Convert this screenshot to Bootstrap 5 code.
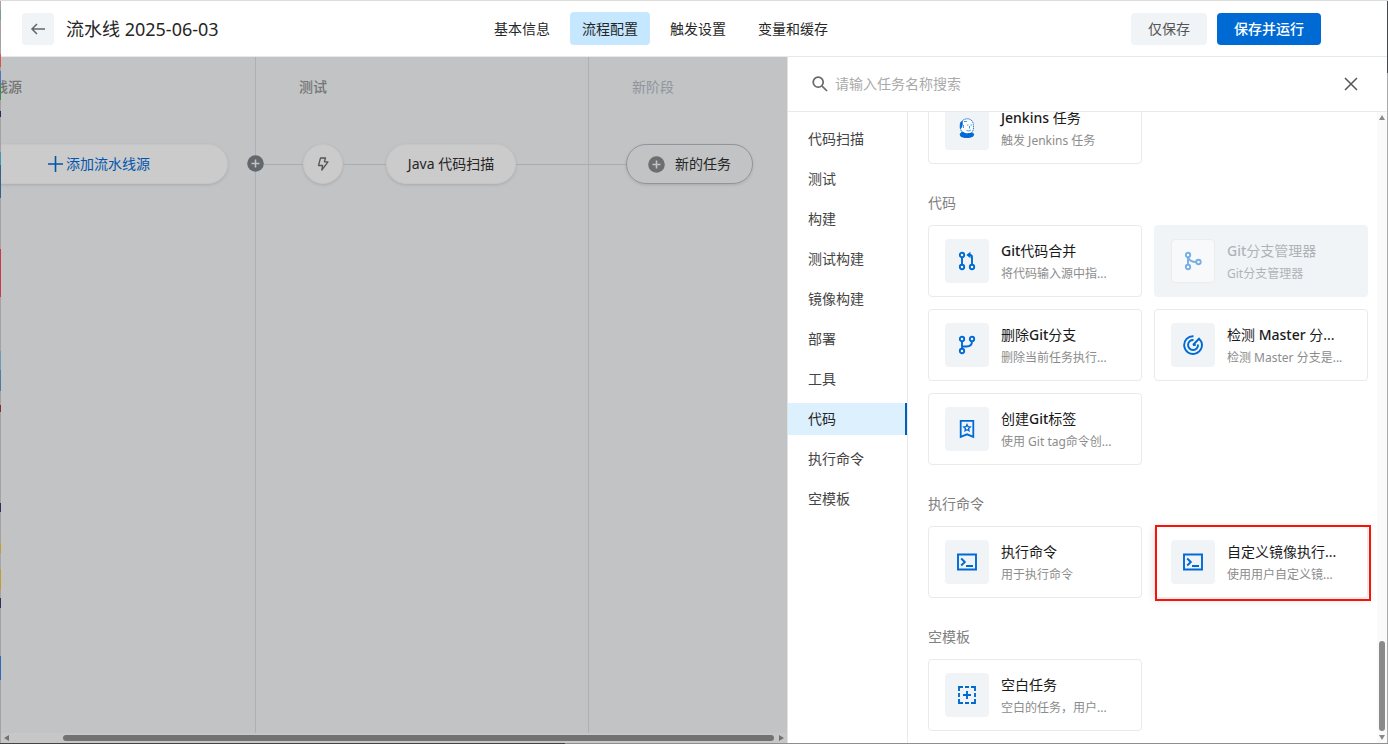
<!DOCTYPE html>
<html lang="zh-CN">
<head>
<meta charset="utf-8">
<meta name="viewport" content="width=device-width, initial-scale=1">
<title>流水线 2025-06-03</title>
<link href="https://cdn.jsdelivr.net/npm/bootstrap@5.3.0/dist/css/bootstrap.min.css" rel="stylesheet">
<script src="https://cdn.jsdelivr.net/npm/bootstrap@5.3.0/dist/js/bootstrap.bundle.min.js" defer></script>
<style>
  :root { --blue: #006ad4; --ink: #262626; --line: #e9e9e9; --tint: #f0f4f7; }
  body {
    font-family: "Noto Sans", "Noto Sans CJK SC", sans-serif;
    font-size: 14px; line-height: 22px; color: var(--ink);
    background:
      linear-gradient(#dcdcdc, #dcdcdc) top / 100% 1px no-repeat,
      linear-gradient(to right, #444 0 565px, #8f8f8f 565px) bottom / 100% 1px no-repeat,
      linear-gradient(#45484c 0 73px, #a9a9a9 73px) right / 1px 100% no-repeat,
      linear-gradient(#a9a0a2 0 10px, #74a08c 10px 20px, #a9a0a2 20px 54px, #d2564b 54px 67px, #a9a0a2 67px 71px, #4a76bd 71px 83px, #3f8a50 87px 100px, #a9a0a2 100px 111px, #2e2a58 111px 117px, #a9a0a2 117px 152px, #4397b5 152px 165px, #35618f 165px 198px, #a9a0a2 198px 249px, #c8394f 249px 297px, #a9a0a2 297px 351px, #6c9bb5 351px 370px, #4a7cab 370px 391px, #a9a0a2 391px 405px, #842d31 405px 412px, #a9a0a2 412px 503px, #332f59 503px 512px, #a9a0a2 512px 543px, #bca02f 543px 553px, #a9a5a9 553px 569px, #bca02f 569px 590px, #a9a0a2 590px 598px, #332f59 598px 608px, #a9a0a2 608px 656px, #3568b5 656px 680px, #a9a0a2 680px) left / 1px 100% no-repeat;
  }
  button { font: inherit; color: inherit; }
  .window { padding: 1px; }
  .topbar { display: grid; grid-template-columns: 1fr auto 1fr; flex: none; height: 56px; padding-right: 66px; border-bottom: 1px solid #e6e9ec; }
  .crumb { padding-left: 21px; gap: 12px; }
  .crumb h1 { font-size: 18px; line-height: 28px; }
  .btn-back, .btn-soft, .btn-run { height: 32px; border: 0; border-radius: 4px; }
  .btn-back { width: 32px; background: var(--tint); color: #666; }
  .btn-soft { background: var(--tint); color: #555; padding: 0 17px; }
  .btn-run { background: var(--blue); color: #fff; padding: 0 17px; font-weight: 500; }
  .tab { height: 33px; padding: 6px 12px; border-radius: 4px; color: var(--ink); text-decoration: none; }
  .tab.active { background: #c5e7ff; }

  .board { background: #c1c3c5; min-width: 0; }
  .stage { padding-top: 19px; border-right: 1px solid #adb1b5; flex: none; }
  .stage h2 { font-size: 14px; line-height: 22px; font-weight: 500; color: #757575; margin: 0 0 46px; padding-left: 43px; }
  .stage-source { width: 333px; margin-left: -78px; }
  .stage-test { width: 333px; }
  .stage-new { flex: 1; border: 0; }
  .stage-new h2 { color: #8f959b; font-weight: 400; }
  .track { height: 40px; }
  .wire { height: 1px; background: #a8adb2; }
  .node { height: 40px; border-radius: 20px; border: 1px solid #c4c6c8; background: #cbcbcb; box-shadow: 0 1px 3px rgba(0,0,0,.12); white-space: nowrap; padding: 0; }
  .node-source { width: 259px; margin-left: 46px; color: #0056ac; gap: 2px; }
  .node-round { width: 40px; color: #555; }
  .node-job { width: 130px; }
  .node-new { width: 127px; border-color: #8f959b; background: transparent; gap: 10px; }
  .w-a { width: 47px; } .w-b { width: 43px; } .w-c { width: 37px; }
  .joint { right: -9px; top: 11px; width: 17px; height: 17px; border: 0; padding: 0; background: none; color: #63686c; display: flex; z-index: 1; }
  .hbar { height: 10px; flex: none; background: #c7c7c7; padding: 0 3px; }
  .hbar .thumb { height: 6px; border-radius: 3px; background: #727272; margin: 0 5px 0 54px; }

  .drawer { width: 600px; flex: none; border-left: 1px solid #dfe1e3; background: #fff; }
  .finder { height: 55px; flex: none; border-bottom: 1px solid var(--line); padding: 0 28px 0 24px; }
  .finder input { border: 0; outline: 0; margin-left: 7px; padding: 0; background: none; }
  .finder input::placeholder { color: #aaa; opacity: 1; }
  .kinds { width: 120px; flex: none; padding-top: 11px; gap: 8px; border-right: 1px solid var(--line); }
  .kinds a { height: 32px; flex: none; padding: 5px 20px; color: #444; text-decoration: none; }
  .kinds a.active { background: #dcf0fe; color: var(--ink); border-right: 2px solid #005fb8; }
  .tasks { padding: 0 9px 12px 20px; min-width: 0; overflow: hidden; }
  .tasks h3 { font-size: 14px; line-height: 21px; font-weight: 400; color: #808080; margin: 28px 0 12px; }
  .tiles { display: grid; grid-template-columns: 1fr 1fr; gap: 12px; }
  .tile { height: 72px; background: #fff; border: 1px solid #e8eaec; border-radius: 4px; padding: 0 16px; gap: 12px; text-align: left; white-space: nowrap; }
  .pic { width: 44px; height: 44px; flex: none; border-radius: 4px; background: var(--tint); color: var(--blue); }
  .tile-text { padding-top: 4px; }
  .tile b { display: block; font-weight: 400; line-height: 22px; color: #1a1a1a; }
  .latin { font-weight: 500; }
  .tile small { display: block; font-size: 12px; line-height: 24px; color: #8c8c8c; }
  .tile:disabled { background: var(--tint); border-color: var(--tint); }
  .tile:disabled > * { opacity: .5; }
  .tile:disabled b, .tile:disabled small { color: #6f7377; }
  .tile:disabled .pic { background: #fff; border: 1px solid #e4e7ea; }
  .picked { position: relative; box-shadow: 0 2px 8px rgba(0,0,0,.12); }
  .picked::after { content: ""; position: absolute; inset: -2px -4px -4px 0; border: 2px solid #f91206; }
  .vbar { width: 10px; flex: none; background: #fafafa; padding: 3px 0; }
  .vbar .thumb { width: 6px; height: 90px; border-radius: 3px; background: #8a8a8a; margin-bottom: 4px; }
</style>
</head>
<body>
<svg width="0" height="0" class="position-absolute" aria-hidden="true">
  <symbol id="plus-dot" viewBox="0 0 17 17"><circle cx="8.500" cy="8.500" r="8.300" fill="currentColor"/><path d="M8.500 4.500v8M4.500 8.500h8" stroke="#c1c3c5" stroke-width="1.600"/></symbol>
  <symbol id="shell" viewBox="0 0 20 20"><path d="M1 2.500h18v15H1z M4.200 6.500l3.600 3.500-3.600 3.500M9 14h7" fill="none" stroke="currentColor" stroke-width="1.900"/></symbol>
</svg>
<div class="window d-flex flex-column vh-100">
  <header class="topbar bg-white align-items-center">
    <div class="crumb d-flex align-items-center">
      <button class="btn-back d-flex align-items-center justify-content-center p-0" aria-label="返回">
        <svg width="16" height="14" viewBox="0 0 16 14" fill="none" stroke="currentColor" stroke-width="1.500"><path d="M15 7H2M7 2L2 7l5 5"/></svg>
      </button>
      <h1 class="m-0 fw-normal">流水线 2025-06-03</h1>
    </div>
    <nav class="d-flex gap-2">
      <a class="tab" href="#">基本信息</a>
      <a class="tab active" href="#" aria-current="page">流程配置</a>
      <a class="tab" href="#">触发设置</a>
      <a class="tab" href="#">变量和缓存</a>
    </nav>
    <div class="d-flex justify-content-end" style="gap:10px">
      <button class="btn-soft">仅保存</button>
      <button class="btn-run">保存并运行</button>
    </div>
  </header>

  <div class="d-flex flex-grow-1 overflow-hidden">
    <main class="board d-flex flex-column flex-grow-1 overflow-hidden">
      <div class="d-flex flex-grow-1">
        <section class="stage stage-source">
          <h2>流水线源</h2>
          <div class="track position-relative">
            <button class="node node-source d-flex align-items-center justify-content-center">
              <svg width="17" height="16" viewBox="0 0 17 16" stroke="currentColor" stroke-width="1.600"><path d="M8.500 0v16M1 8h15"/></svg>添加流水线源
            </button>
            <button class="joint position-absolute" aria-label="添加阶段"><svg width="17" height="17"><use href="#plus-dot"/></svg></button>
          </div>
        </section>
        <section class="stage stage-test">
          <h2>测试</h2>
          <div class="track d-flex align-items-center">
            <div class="wire w-a"></div>
            <button class="node node-round d-flex align-items-center justify-content-center" aria-label="触发条件">
              <svg width="12" height="14" viewBox="0 0 12 14" fill="none" stroke="currentColor" stroke-width="1.300" stroke-linejoin="round"><path d="M3.500 1h5L7.400 4.800H11L4.800 13l.8-4.500H1.500z"/></svg>
            </button>
            <div class="wire w-b"></div>
            <button class="node node-job">Java 代码扫描</button>
            <div class="wire flex-grow-1"></div>
          </div>
        </section>
        <section class="stage stage-new">
          <h2>新阶段</h2>
          <div class="track d-flex align-items-center">
            <div class="wire w-c"></div>
            <button class="node node-new d-flex align-items-center justify-content-center"><svg width="17" height="17" color="#6e6e6e"><use href="#plus-dot"/></svg>新的任务</button>
          </div>
        </section>
      </div>
      <div class="hbar d-flex align-items-center">
        <svg width="5" height="6" fill="#727272"><path d="M5 0v6L0 3z"/></svg>
        <div class="thumb flex-grow-1"></div>
        <svg width="5" height="6" fill="#727272"><path d="M0 0v6l5-3z"/></svg>
      </div>
    </main>

    <aside class="drawer d-flex flex-column">
      <div class="finder d-flex align-items-center">
        <svg width="16" height="16" viewBox="0 0 16 16" fill="none" stroke="#666" stroke-width="1.700"><circle cx="6.200" cy="6.200" r="5"/><path d="M10 10l5 5"/></svg>
        <input class="flex-grow-1" type="text" placeholder="请输入任务名称搜索" aria-label="搜索任务">
        <button class="border-0 bg-transparent p-0 d-flex" aria-label="关闭"><svg width="16" height="16" viewBox="0 0 16 16" stroke="#555" stroke-width="1.500"><path d="M2 2l12 12M14 2L2 14"/></svg></button>
      </div>
      <div class="d-flex flex-grow-1 overflow-hidden">
        <nav class="kinds d-flex flex-column">
          <a href="#">代码扫描</a><a href="#">测试</a><a href="#">构建</a><a href="#">测试构建</a><a href="#">镜像构建</a><a href="#">部署</a><a href="#">工具</a><a href="#" class="active">代码</a><a href="#">执行命令</a><a href="#">空模板</a>
        </nav>
        <div class="tasks d-flex flex-column justify-content-end flex-grow-1">
          <div class="tiles">
            <button class="tile d-flex align-items-center">
              <span class="pic d-flex align-items-center justify-content-center">
                <svg width="16" height="20" viewBox="0 0 16 20" fill="none" stroke="currentColor"><path d="M3.500 15.500C1.500 12 1 9 1.500 6 2.200 2.800 5 .7 8.500.8c3.500 0 5.500 2.400 5.800 5.500.4 3.500.4 7-2.300 9.200z" fill="#fff" stroke-width=".9" stroke-dasharray="1.500 .6"/><path d="M1.300 5l2-2 .2 3-.8 3.500-1.500 1z" fill="currentColor" stroke-width=".6"/><path d="M1 16l2.500-2 4 2.300 5-1.300 2.300 1-1 2.400Q8 21 2 18.500z" fill="currentColor"/><path d="M4.500 7v3M8 7h1.500M11.500 7h1.500M10.500 8v2.500M7.500 12.500q2.500 1.200 4.500-.5M5 3.500h3" stroke-width=".7"/></svg>
              </span>
              <span class="tile-text"><b><span class="latin">Jenkins</span> 任务</b><small>触发 Jenkins 任务</small></span>
            </button>
          </div>
          <h3>代码</h3>
          <div class="tiles">
            <button class="tile d-flex align-items-center">
              <span class="pic d-flex align-items-center justify-content-center">
                <svg width="18" height="20" viewBox="0 0 18 20" fill="none" stroke="currentColor" stroke-width="1.900"><circle cx="4" cy="4" r="2.200"/><circle cx="4" cy="16" r="2.200"/><circle cx="14" cy="16" r="2.200"/><path d="M4 6.200v7.600M14 13.800V6q0-2-2-2h-1"/><path d="M12.500.8v6.400L8.300 4z" fill="currentColor" stroke="none"/></svg>
              </span>
              <span class="tile-text"><b><span class="latin">Git</span>代码合并</b><small>将代码输入源中指...</small></span>
            </button>
            <button class="tile d-flex align-items-center" disabled>
              <span class="pic d-flex align-items-center justify-content-center">
                <svg width="18" height="20" viewBox="0 0 18 20" fill="none" stroke="currentColor" stroke-width="1.900"><circle cx="4" cy="4" r="2.200"/><circle cx="4" cy="16" r="2.200"/><circle cx="14.500" cy="11" r="2.200"/><path d="M4 6.200v7.600M4 6.200q1.500 4.800 8.300 4.800"/></svg>
              </span>
              <span class="tile-text"><b><span class="latin">Git</span>分支管理器</b><small>Git分支管理器</small></span>
            </button>
            <button class="tile d-flex align-items-center">
              <span class="pic d-flex align-items-center justify-content-center">
                <svg width="18" height="20" viewBox="0 0 18 20" fill="none" stroke="currentColor" stroke-width="1.900"><circle cx="4" cy="4" r="2.200"/><circle cx="4" cy="16" r="2.200"/><circle cx="14" cy="4" r="2.200"/><path d="M4 6.200v7.600M14 6.200q0 5.300-5.500 5.300H4"/></svg>
              </span>
              <span class="tile-text"><b>删除<span class="latin">Git</span>分支</b><small>删除当前任务执行...</small></span>
            </button>
            <button class="tile d-flex align-items-center">
              <span class="pic d-flex align-items-center justify-content-center">
                <svg width="20" height="20" viewBox="0 0 20 20" fill="none" stroke="currentColor" stroke-width="1.900"><path d="M10.500 1.200A8.900 8.900 0 1 0 18.200 6.500L16 3.800 10 10"/><path d="M10.500 5A5 5 0 1 0 15 9.500"/><path d="M10 10h2.800"/></svg>
              </span>
              <span class="tile-text"><b>检测 <span class="latin">Master</span> 分...</b><small>检测 Master 分支是...</small></span>
            </button>
            <button class="tile d-flex align-items-center">
              <span class="pic d-flex align-items-center justify-content-center">
                <svg width="16" height="20" viewBox="0 0 16 20" fill="none" stroke="currentColor" stroke-width="1.800"><path d="M1.700 1.800h12.600v16L8 15.300l-6.300 2.500z"/><path d="M8 5.500l1 2.100 2.300.3-1.700 1.600.4 2.300L8 10.700l-2 1.100.4-2.300-1.700-1.600L7 7.600z" stroke-width="1.300"/></svg>
              </span>
              <span class="tile-text"><b>创建<span class="latin">Git</span>标签</b><small>使用 Git tag命令创...</small></span>
            </button>
          </div>
          <h3>执行命令</h3>
          <div class="tiles">
            <button class="tile d-flex align-items-center">
              <span class="pic d-flex align-items-center justify-content-center"><svg width="20" height="20"><use href="#shell"/></svg></span>
              <span class="tile-text"><b>执行命令</b><small>用于执行命令</small></span>
            </button>
            <button class="tile picked d-flex align-items-center">
              <span class="pic d-flex align-items-center justify-content-center"><svg width="20" height="20"><use href="#shell"/></svg></span>
              <span class="tile-text"><b>自定义镜像执行...</b><small>使用用户自定义镜...</small></span>
            </button>
          </div>
          <h3>空模板</h3>
          <div class="tiles">
            <button class="tile d-flex align-items-center">
              <span class="pic d-flex align-items-center justify-content-center">
                <svg width="18" height="18" viewBox="0 0 18 18" fill="none" stroke="currentColor" stroke-width="1.900"><path d="M1 5V1h4M7 1h4M13 1h4v4M17 7v4M17 13v4h-4M11 17H7M5 17H1v-4M1 11V7M9 5v8M5 9h8"/></svg>
              </span>
              <span class="tile-text"><b>空白任务</b><small>空白的任务，用户...</small></span>
            </button>
          </div>
        </div>
        <div class="vbar d-flex flex-column align-items-center">
          <svg width="6" height="5" fill="#8a8a8a"><path d="M0 5h6L3 0z"/></svg>
          <div class="thumb mt-auto"></div>
          <svg width="6" height="5" fill="#8a8a8a"><path d="M0 0h6L3 5z"/></svg>
        </div>
      </div>
    </aside>
  </div>
</div>
</body>
</html>
